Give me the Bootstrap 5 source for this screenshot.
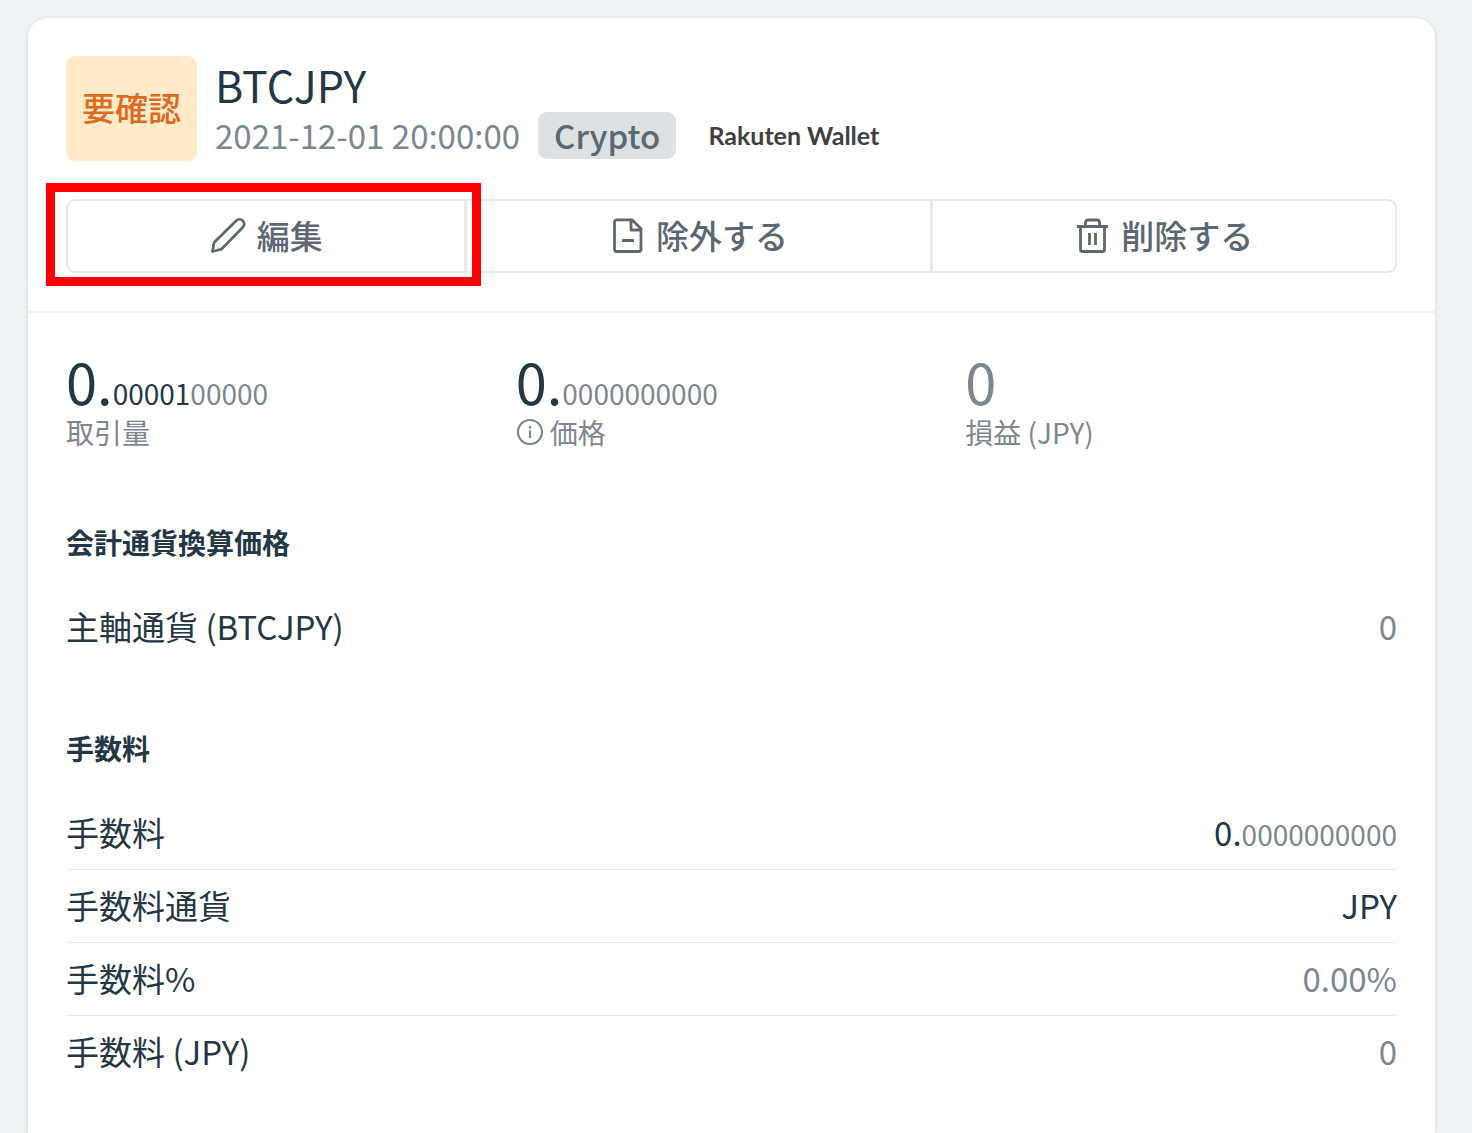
<!DOCTYPE html>
<html lang="ja">
<head>
<meta charset="utf-8">
<meta name="viewport" content="width=device-width, initial-scale=1">
<title>BTCJPY</title>
<link href="https://cdn.jsdelivr.net/npm/bootstrap@5.3.0/dist/css/bootstrap.min.css" rel="stylesheet">
<style>
  body { background: #eff3f6; color: #243746; font-family: "Noto Sans CJK JP", sans-serif; font-size: 33px; line-height: 47px; padding: 18px 37px 0 28px; }
  .trade-card { border-radius: 20px 20px 0 0; box-shadow: 0 1px 4px rgba(36, 55, 70, .16); }
  .trade-head { padding: 38px; border-bottom: 2px solid #f0f2f3; }
  .trade-body { padding: 38px; }
  .head-row { gap: 18px; margin-bottom: 38px; }
  .status-tag { background: #ffebc8; color: #de6a1e; font-weight: 500; border-radius: 9px; padding: 28px 16px 30px; }
  .pair-name { font-size: 43px; line-height: 56px; font-weight: 400; margin: 0; }
  .soft { color: #7c8791; }
  .meta-row { column-gap: 18px; }
  .kind-tag { background: #dde1e4; color: #5b6872; font-weight: 500; border-radius: 9px; padding: 0 16px; }
  .wallet-name { font: 700 25px/47px Lato, sans-serif; color: #404040; padding-left: 14px; }
  .btn-act { --bs-btn-color: #5b6872; --bs-btn-border-color: #e7eaec; --bs-btn-border-width: 2px; --bs-btn-border-radius: 9px; --bs-btn-font-size: 33px; --bs-btn-font-weight: 500; --bs-btn-line-height: 44px; --bs-btn-padding-x: 12px; --bs-btn-hover-color: #243746; --bs-btn-hover-border-color: #e0e4e6; --bs-btn-hover-bg: #f6f8f9; gap: 10px; padding-top: 12px; padding-bottom: 14px; }
  .btn-group > .btn-act:not(:first-child) { margin-left: -2px; }
  .btn-act svg { width: 37px; height: 37px; }
  .callout-box { position: absolute; inset: -18px -17px -15px -22px; border: 9px solid #f00; z-index: 5; pointer-events: none; }
  .btn-act:first-child { z-index: 3; }
  .stats { --bs-gutter-x: 18px; padding-bottom: 4px; }
  .stat-value { font-size: 56px; line-height: 60px; }
  .decimals { font-size: 28px; line-height: 1; }
  .stat-label { font-size: 28px; line-height: 42px; gap: 6px; }
  .sect { margin-top: 65px; }
  .sect-title { font-size: 28px; line-height: 40px; font-weight: 700; margin: 0 0 29px; }
  .lines { margin: 0; }
  .line-item { padding: 12px 0 13px; }
  .line-item + .line-item { border-top: 1px solid #e4e8ea; }
  .line-item dt { font-weight: 400; }
</style>
</head>
<body class="d-flex flex-column min-vh-100">
<main class="trade-card bg-white flex-grow-1">
  <header class="trade-head">
    <div class="head-row d-flex align-items-start">
      <div class="status-tag">要確認</div>
      <div>
        <h1 class="pair-name">BTCJPY</h1>
        <div class="meta-row d-flex flex-wrap align-items-center">
          <time class="soft" datetime="2021-12-01T20:00:00">2021-12-01 20:00:00</time>
          <span class="kind-tag">Crypto</span>
          <span class="wallet-name">Rakuten Wallet</span>
        </div>
      </div>
    </div>
    <div class="btn-group d-flex" role="group">
      <button type="button" class="btn btn-act d-flex align-items-center justify-content-center">
        <svg viewBox="0 0 37 37" fill="none" stroke="currentColor" stroke-width="2.8" stroke-linejoin="round" aria-hidden="true"><path d="M2.500 34.500l1.600-9L26.200 3.700a4.500 4.500 0 0 1 6.600 6.600L11.400 32.200z"/></svg>
        編集
        <span class="callout-box"></span>
      </button>
      <button type="button" class="btn btn-act d-flex align-items-center justify-content-center">
        <svg viewBox="0 0 37 37" fill="none" stroke="currentColor" stroke-width="2.8" stroke-linejoin="round" aria-hidden="true"><path d="M7.500 2.800h15.500l9 9v20.700a2 2 0 0 1-2 2H7.500a2 2 0 0 1-2-2V4.800a2 2 0 0 1 2-2zM22 3v10h10M13 23.500h12"/></svg>
        除外する
      </button>
      <button type="button" class="btn btn-act d-flex align-items-center justify-content-center">
        <svg viewBox="0 0 37 37" fill="none" stroke="currentColor" stroke-width="2.8" stroke-linejoin="round" aria-hidden="true"><path d="M3 9.500h31M6.500 9.500v23a2 2 0 0 0 2 2h20a2 2 0 0 0 2-2v-23M11.500 9V5.500a2.500 2.500 0 0 1 2.500-2.500h9a2.500 2.500 0 0 1 2.500 2.500V9M15.500 16v12M21.500 16v12"/></svg>
        削除する
      </button>
    </div>
  </header>
  <div class="trade-body">
    <div class="stats row">
      <div class="col-4">
        <div class="stat-value">0.<span class="decimals">00001<span class="soft">00000</span></span></div>
        <div class="stat-label soft">取引量</div>
      </div>
      <div class="col-4">
        <div class="stat-value">0.<span class="decimals soft">0000000000</span></div>
        <div class="stat-label soft d-flex align-items-center">
          <svg width="28" height="28" viewBox="0 0 28 28" fill="none" stroke="currentColor" stroke-width="2.2" aria-hidden="true"><circle cx="14" cy="14" r="12"/><path d="M14 12.500v7.500M14 8v2.500"/></svg>
          価格
        </div>
      </div>
      <div class="col-4">
        <div class="stat-value soft">0</div>
        <div class="stat-label soft">損益 (JPY)</div>
      </div>
    </div>
    <section class="sect">
      <h2 class="sect-title">会計通貨換算価格</h2>
      <dl class="lines">
        <div class="line-item d-flex justify-content-between"><dt>主軸通貨 (BTCJPY)</dt><dd class="soft m-0">0</dd></div>
      </dl>
    </section>
    <section class="sect">
      <h2 class="sect-title">手数料</h2>
      <dl class="lines">
        <div class="line-item d-flex justify-content-between"><dt>手数料</dt><dd class="m-0">0.<span class="decimals soft">0000000000</span></dd></div>
        <div class="line-item d-flex justify-content-between"><dt>手数料通貨</dt><dd class="m-0">JPY</dd></div>
        <div class="line-item d-flex justify-content-between"><dt>手数料%</dt><dd class="soft m-0">0.00%</dd></div>
        <div class="line-item d-flex justify-content-between"><dt>手数料 (JPY)</dt><dd class="soft m-0">0</dd></div>
      </dl>
    </section>
  </div>
</main>
<script src="https://cdn.jsdelivr.net/npm/bootstrap@5.3.0/dist/js/bootstrap.bundle.min.js"></script>
</body>
</html>
